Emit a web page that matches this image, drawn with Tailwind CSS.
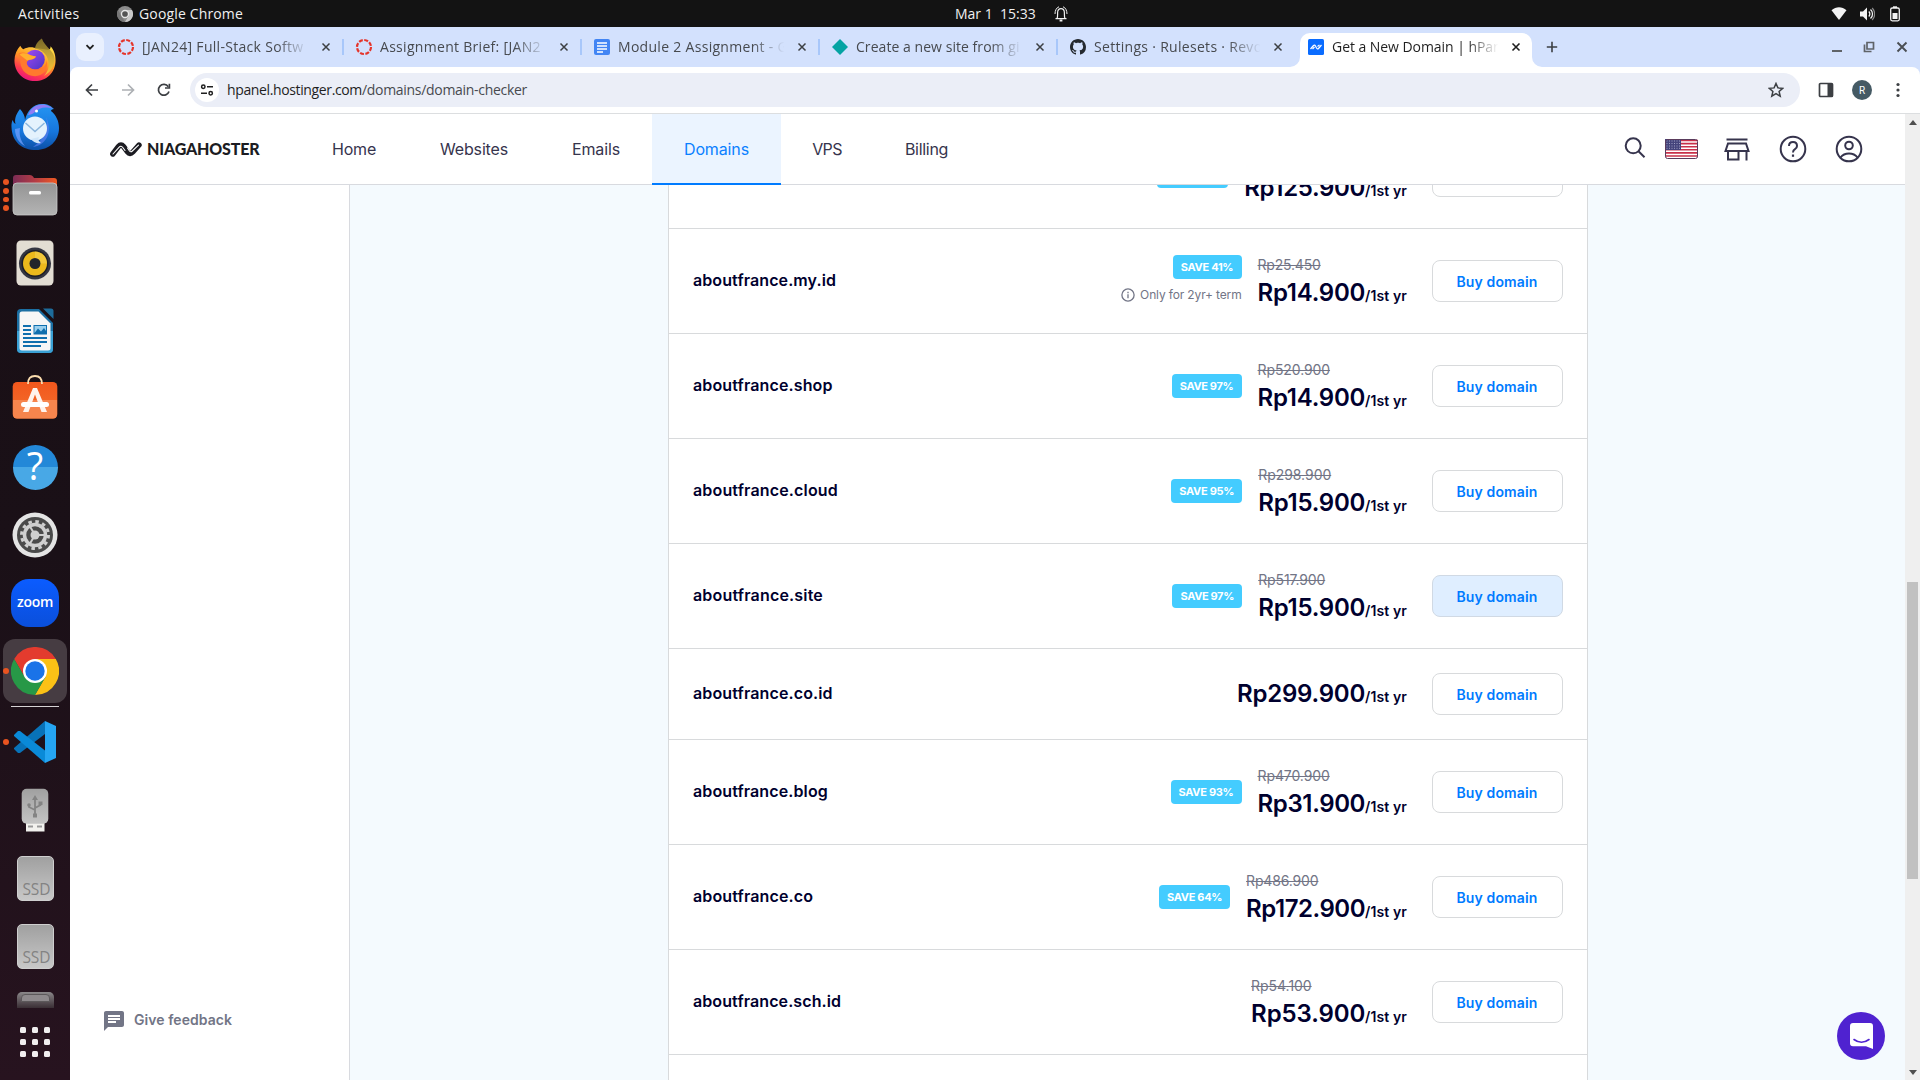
<!DOCTYPE html>
<html lang="en">
<head>
<meta charset="utf-8">
<title>Get a New Domain | hPanel</title>
<script src="https://cdn.jsdelivr.net/npm/@tailwindcss/browser@4"></script>
</head>
<body class="w-[1920px] h-[1080px] overflow-hidden bg-[#131313] font-['Open_Sans',sans-serif]">
<div class="flex h-[1080px] w-[1920px] flex-col">

  <!-- GNOME top bar -->
  <header class="relative flex h-[27px] shrink-0 items-center bg-[#131313] text-sm leading-[27px] text-[#f0f0f0]">
    <span class="ml-[18px] w-[99px] tracking-[0.4px]">Activities</span>
    <svg class="size-4" viewBox="0 0 48 48"><circle cx="24" cy="24" r="24" fill="#8c8c8c"/><path d="M24 12H44.8A24 24 0 0 1 24 48L34.4 30Z" fill="#c9c9c9"/><path d="M24 48A24 24 0 0 1 3.2 12L13.6 30Z" fill="#777"/><circle cx="24" cy="24" r="12.5" fill="#e8e8e8"/><circle cx="24" cy="24" r="8.5" fill="#555"/></svg>
    <span class="ml-[6px] tracking-[0.15px]">Google Chrome</span>
    <div class="absolute left-[955px] top-0 flex items-center gap-[17px]">
      <span class="whitespace-pre">Mar 1  15:33</span>
      <svg class="size-4" viewBox="0 0 16 16" fill="none" stroke="#f0f0f0" stroke-width="1.2"><path d="M2.5 12.7H13.5M4 12.5C4.8 10.5 4.6 9 4.6 6.8C4.6 4 6 2.6 8 2.6S11.400 4 11.400 6.800C11.400 9 11.200 10.500 12 12.500"/><path d="M6.600 14.500H9.400" stroke-width="2"/><path d="M2 8C2 4.500 3.500 1.500 6 .8M14 8C14 4.500 12.500 1.500 10 .8" stroke-width="1"/></svg>
    </div>
    <div class="ml-auto mr-[17px] flex items-center gap-[12px]">
      <svg class="size-4" viewBox="0 0 16 16" fill="#f2f2f2"><path d="M.5 4.200C5 .3 11 .3 15.500 4.200L8 14Z"/></svg>
      <svg class="size-4" viewBox="0 0 16 16" fill="#f2f2f2"><path d="M1 5.500H4L8 1.500V14.500L4 10.500H1Z"/><path d="M9.800 5.500A3.500 3.500 0 0 1 9.800 10.500M11.500 3.500A6 6 0 0 1 11.500 12.500" fill="none" stroke="#f2f2f2" stroke-width="1.300"/><path d="M13.200 2A8.500 8.500 0 0 1 13.200 14" fill="none" stroke="#8a8a8a" stroke-width="1.200"/></svg>
      <svg class="size-4" viewBox="0 0 16 16"><path d="M6 .3H10V2H6Z" fill="#f2f2f2"/><rect x="3.700" y="2" width="8.600" height="12.800" rx="1.500" fill="none" stroke="#f2f2f2" stroke-width="1.300"/><rect x="5.500" y="7" width="5" height="6" fill="#f2f2f2"/></svg>
    </div>
  </header>

  <div class="flex min-h-0 flex-1">

    <!-- Dock -->
    <aside class="flex w-[70px] shrink-0 flex-col items-center bg-linear-to-b from-[#190f15] via-[#1a1017] to-[#27131f]">
      <div class="flex h-[66px] shrink-0 items-center justify-center pb-[2px]">
        <svg class="h-[45px] w-[44px]" viewBox="0 0 44 46">
          <defs>
            <linearGradient id="ff1" x1=".8" y1="0" x2=".3" y2="1"><stop offset="0" stop-color="#ffe14a"/><stop offset=".45" stop-color="#ff9a22"/><stop offset=".75" stop-color="#ff3d4d"/><stop offset="1" stop-color="#e8127e"/></linearGradient>
            <linearGradient id="ff2" x1="0" y1="0" x2="1" y2="1"><stop offset="0" stop-color="#a44af5"/><stop offset="1" stop-color="#4a35c4"/></linearGradient>
            <linearGradient id="ff3" x1="0" y1="0" x2="0" y2="1"><stop offset="0" stop-color="#8d7a2b"/><stop offset="1" stop-color="#ffd43c"/></linearGradient>
          </defs>
          <path d="M7 9C8 11 8.500 11.500 10 12.500C14 10.500 18 10 21 11L35 13C37 13 38 12 38 9.500C42 14 43 19 43 24C43 36 34 45 22 45S1 36 1 24C1 18 3.500 13 7 9Z" fill="url(#ff1)"/>
          <path d="M29 1.500C24 5 22.500 8 22 12C30 13 36 19 36 28C36 34 33 38 31 40C38 36 42 30 42 22C41.500 14 32 10 29 1.500Z" fill="url(#ff3)" opacity=".85"/>
          <circle cx="22" cy="23" r="10" fill="url(#ff2)"/>
          <path d="M5 17C9 14.500 14 16 18 19L23 20C22 23 18 23 15 24C12 26 14 31 20 33C27 35 33 31 34 24C36 33 30 40 22 40C12 40 6 32 7 22Z" fill="#ff7a2e"/>
          <path d="M6 18C10 15.500 15 17 18 19L23 20C21 23 18 23 14 24Z" fill="#ffb02e"/>
        </svg>
      </div>
      <div class="flex h-[68px] shrink-0 items-center justify-center">
        <svg class="size-12" viewBox="0 0 48 48">
          <defs><linearGradient id="tb" x1="0" y1="0" x2="0" y2="1"><stop offset="0" stop-color="#2596f3"/><stop offset=".6" stop-color="#1676dd"/><stop offset="1" stop-color="#0c4fa5"/></linearGradient></defs>
          <path d="M9 6C12 9 14 13 14 17C16 8 22 1 31 1C37 1 40 3 43 6C41 6 40 7 40 8C45 12 48 18 48 25C48 38 38 47 25 47C11 47 1 39 .5 24C.3 21 .8 19 1.500 17C2.500 19 3 20 4.500 21C3 15 6 10 9 6Z" fill="url(#tb)"/>
          <path d="M17 12C20 5 25 1 33 1.500C37 2 40 4 42 6C34 3 28 5 24 9C22 11 19 12 17 12Z" fill="#8f7cf5"/>
          <path d="M35 14C38 24 34 36 22 44C36 42 42 28 35 14Z" fill="#5a7ff0" opacity=".7"/>
          <path d="M4 26C4 34 8 40 14 43C9 37 8 31 9 25Z" fill="#79a4ff" opacity=".7"/>
          <ellipse cx="24" cy="25.500" rx="12" ry="12" fill="#e4f2fd"/><path d="M20 36C23 40 27 41 30 40C27 38 27 36 28 34Z" fill="#cfe6fb"/>
          <path d="M14.500 20L24 28.500L33.500 20" fill="none" stroke="#8bb6dd" stroke-width="1.500"/>
          <circle cx="25.500" cy="8" r="1.500" fill="#fff"/>
        </svg>
      </div>
      <div class="relative flex h-[68px] w-full shrink-0 items-center justify-center">
        <div class="absolute left-[3px] top-[18px] flex flex-col gap-[3px]"><i class="size-[5.800px] rounded-full bg-[#e95420]"></i><i class="size-[5.800px] rounded-full bg-[#e95420]"></i><i class="size-[5.800px] rounded-full bg-[#e95420]"></i><i class="size-[5.800px] rounded-full bg-[#e95420]"></i></div>
        <svg class="h-[42px] w-[46px]" viewBox="0 0 46 42">
          <defs><linearGradient id="fl1"><stop offset="0" stop-color="#7c2c55"/><stop offset=".5" stop-color="#b43c45"/><stop offset="1" stop-color="#f05a22"/></linearGradient><linearGradient id="fl2" x2="0" y2="1"><stop offset="0" stop-color="#949494"/><stop offset="1" stop-color="#b4b4b4"/></linearGradient></defs>
          <path d="M1 14V4Q1 1 4 1H18Q20 1 21 2.500L22 4H42Q45 4 45 7V14Z" fill="url(#fl1)"/>
          <rect x="1" y="9" width="44" height="32" rx="4" fill="url(#fl2)" stroke="#c9c9c9" stroke-width=".8"/><rect x="17" y="17" width="12" height="3.500" rx="1.500" fill="#fff"/>
        </svg>
      </div>
      <div class="flex h-[68px] shrink-0 items-center justify-center">
        <svg class="h-[46px] w-[38px]" viewBox="0 0 38 46"><rect x=".5" y=".5" width="37" height="45" rx="4.500" fill="#e2ddd3"/><circle cx="19" cy="23.500" r="16" fill="#343642"/><circle cx="19" cy="23.500" r="13.500" fill="#1d1e26"/><circle cx="19" cy="23.500" r="12" fill="#ecb91c"/><path d="M19 11.500A12 12 0 0 1 31 23.500H19Z" fill="#f6d55a" opacity=".5"/><circle cx="19" cy="23.500" r="5.500" fill="#23242a"/></svg>
      </div>
      <div class="flex h-[68px] shrink-0 items-center justify-center">
        <svg class="h-[46px] w-[38px]" viewBox="0 0 38 46"><path d="M5 1H23L37 15V41Q37 45 33 45H5Q1 45 1 41V5Q1 1 5 1Z" fill="#1b6fa3"/><path d="M1 23H37V41Q37 45 33 45H5Q1 45 1 41Z" fill="#3aa0d4"/><path d="M27 .5H35Q37.500 .5 37.500 3V11Z" fill="#1d6c9b"/><path d="M6 3.500H22.500L34.500 15.500V40Q34.500 42.500 32 42.500H6Q3.500 42.500 3.500 40V6Q3.500 3.500 6 3.500Z" fill="#f6f6f6"/><g fill="#0f6fae"><path d="M7 17H15V19H7ZM7 21H15V23H7ZM7 25H15V27H7ZM7 29H31V31H7ZM7 33H31V35H7ZM7 37H25V39H7Z"/><path d="M17.500 17H31V26.500H17.500Z" /></g><path d="M18.500 18H30V23L28 20L25 23.500L22 20.500L18.500 25Z" fill="#9bd0ee"/></svg>
      </div>
      <div class="flex h-[68px] shrink-0 items-center justify-center">
        <svg class="-mt-[4px] h-[46px] w-[46px]" viewBox="0 0 46 46"><defs><linearGradient id="sw" x2="0" y2="1"><stop offset="0" stop-color="#f2571c"/><stop offset="1" stop-color="#f4712f"/></linearGradient></defs><rect x=".7" y="8" width="44.600" height="36.500" rx="4.500" fill="url(#sw)"/><path d="M1 26H45V40Q45 44.500 41 44.500H5Q1 44.500 1 40Z" fill="#f6854d"/><path d="M16 10Q16 2 23 2T30 10" fill="none" stroke="#fbdcae" stroke-width="1.800"/><path d="M21 14H25L35 38H29.500L23 20.500L16.500 38H11Z" fill="#fff3ec"/><rect x="9" y="28" width="28" height="5" rx="2.500" fill="#fff"/></svg>
      </div>
      <div class="flex h-[68px] shrink-0 items-center justify-center">
        <div class="flex size-[45px] items-center justify-center rounded-full bg-linear-to-b from-[#2388d8] from-50% to-[#48a8e6] to-50% pb-1 font-['Open_Sans',sans-serif] text-[38px] leading-none text-white">?</div>
      </div>
      <div class="flex h-[68px] shrink-0 items-center justify-center">
        <svg class="size-[46px]" viewBox="0 0 46 46"><circle cx="23" cy="23" r="22.500" fill="#e4e4e4"/><circle cx="23" cy="23" r="18" fill="#4a4a4a"/><circle cx="23" cy="23" r="13.500" fill="none" stroke="#cfcfcf" stroke-width="3" stroke-dasharray="3.530 3.530"/><circle cx="23" cy="23" r="10.500" fill="none" stroke="#cfcfcf" stroke-width="3.500"/><circle cx="23" cy="23" r="4.500" fill="#cfcfcf"/><path d="M23 23L18 14.500M23 23L18 31.500M23 23H34" stroke="#cfcfcf" stroke-width="2"/></svg>
      </div>
      <div class="flex h-[68px] shrink-0 items-center justify-center">
        <div class="flex size-12 items-center justify-center rounded-[18px] bg-linear-to-b from-[#0b5cff] to-[#0a4fdb] font-['Open_Sans',sans-serif] text-[14px] font-semibold leading-none tracking-[-0.300px] text-white"><span class="-mt-[3px]">zoom</span></div>
      </div>
      <div class="relative flex h-[68px] w-full shrink-0 items-center justify-center">
        <div class="flex size-[64px] items-center justify-center rounded-[12px] bg-[#463c42]">
          <svg class="size-12" viewBox="0 0 48 48"><path d="M3.200 12A24 24 0 0 1 44.800 12H24L13.600 30Z" fill="#e33b2e"/><path d="M44.800 12A24 24 0 0 1 24 48L34.400 30L24 12Z" fill="#fbc116"/><path d="M24 48A24 24 0 0 1 3.200 12L13.600 30H34.400Z" fill="#279847"/><circle cx="24" cy="24" r="12" fill="#fff"/><circle cx="24" cy="24" r="9.700" fill="#1a73e8"/></svg>
        </div>
        <i class="absolute left-[3px] top-[31px] size-[5.800px] rounded-full bg-[#e95420]"></i>
      </div>
      <div class="mb-px mt-px h-px w-12 shrink-0 bg-[#d5d2d4]"></div>
      <div class="relative flex h-[68px] w-full shrink-0 items-center justify-center">
        <svg class="size-[42px]" viewBox="0 0 42 42"><path d="M31 0L0 27V28L4 32H6L31 13Z" fill="#0872b8"/><path d="M4 10H6L31 29.500V42L0 15V14Z" fill="#0a8ad8"/><path d="M31 0L42 5V37L31 42Z" fill="#25a5f2"/></svg>
        <i class="absolute left-[3px] top-[31px] size-[5.800px] rounded-full bg-[#e95420]"></i>
      </div>
      <div class="flex h-[68px] shrink-0 items-center justify-center">
        <svg class="h-[44px] w-[28px]" viewBox="0 0 28 44"><defs><linearGradient id="gr" x2="0" y2="1"><stop offset="0" stop-color="#a0a0a0"/><stop offset="1" stop-color="#c4c4c4"/></linearGradient></defs><rect x="5" y="34" width="18.500" height="9.500" fill="#f2f1ee"/><path d="M7 37.500H12V39.500H7ZM16 37.500H21V39.500H16Z" fill="#999"/><rect x=".7" y=".7" width="26.600" height="35" rx="5" fill="url(#gr)"/><g stroke="#838383" stroke-width="1.800" fill="none"><path d="M14 10V27M14 22L8 19V16M14 20L19.500 17V15"/></g><path d="M11 12L14 7L17 12ZM12 25.500H16V29.500H12ZM17.500 13.500H21.500V17H17.500Z" fill="#838383"/><circle cx="8" cy="17" r="1.800" fill="#838383"/></svg>
      </div>
      <div class="flex h-[68px] shrink-0 items-center justify-center">
        <div class="flex h-[45px] w-[37px] items-end justify-center rounded-[5px] border border-[#cfcfcf] bg-linear-to-b from-[#a0a0a0] to-[#c8c8c8] pb-[2px] pl-[3px] text-[15.500px] leading-[18px] text-[#838383]">SSD</div>
      </div>
      <div class="flex h-[68px] shrink-0 items-center justify-center">
        <div class="flex h-[45px] w-[37px] items-end justify-center rounded-[5px] border border-[#cfcfcf] bg-linear-to-b from-[#a0a0a0] to-[#c8c8c8] pb-[2px] pl-[3px] text-[15.500px] leading-[18px] text-[#838383]">SSD</div>
      </div>
      <div class="h-[28px] shrink-0 overflow-hidden pt-[12px]">
        <div class="h-[16px] w-[37px] rounded-t-[5px] bg-linear-to-b from-[#8b888a] to-[#3a2f35] px-1 pt-[2px]"><div class="h-2 rounded-t-[4px] border border-[#5c585a] bg-[#8e898c]"></div></div>
      </div>
      <div class="mt-[19px] grid grid-cols-3 gap-[6px]">
        <i class="size-[6px] rounded-[1.500px] bg-[#f0eeef]"></i><i class="size-[6px] rounded-[1.500px] bg-[#f0eeef]"></i><i class="size-[6px] rounded-[1.500px] bg-[#f0eeef]"></i>
        <i class="size-[6px] rounded-[1.500px] bg-[#f0eeef]"></i><i class="size-[6px] rounded-[1.500px] bg-[#f0eeef]"></i><i class="size-[6px] rounded-[1.500px] bg-[#f0eeef]"></i>
        <i class="size-[6px] rounded-[1.500px] bg-[#f0eeef]"></i><i class="size-[6px] rounded-[1.500px] bg-[#f0eeef]"></i><i class="size-[6px] rounded-[1.500px] bg-[#f0eeef]"></i>
      </div>
    </aside>

    <!-- Browser window -->
    <div class="flex min-w-0 flex-1 flex-col bg-[#d3e1fd]">

      <!-- Tab strip -->
      <div class="flex h-10 shrink-0 items-center pl-[6px] text-sm text-[#474a4f]">
        <div class="flex size-7 items-center justify-center rounded-[9px] bg-[#e9f0fe]"><svg class="size-[10px]" viewBox="0 0 10 10" fill="none" stroke="#1f1f1f" stroke-width="1.800"><path d="M1.500 3.200L5 6.700L8.500 3.200"/></svg></div>
        <div class="flex h-full w-[240px] items-center pl-[13px]">
          <svg class="size-[18px] shrink-0" viewBox="0 0 18 18"><circle cx="9" cy="9" r="7" fill="none" stroke="#e5352b" stroke-width="2.200" stroke-dasharray="4 1.500"/></svg>
          <span class="ml-[7px] w-[168px] shrink-0 overflow-hidden whitespace-nowrap tracking-[0.3px] [mask-image:linear-gradient(to_right,#000_80%,transparent_99%)]">[JAN24] Full-Stack Softw</span>
          <svg class="ml-[11px] size-[10px] shrink-0" viewBox="0 0 10 10" stroke="#3c3f43" stroke-width="1.500"><path d="M1.500 1.500L8.500 8.500M8.500 1.500L1.500 8.500"/></svg>
          <i class="ml-[11px] h-4 w-[2px] shrink-0 bg-[#a8c7fa]"></i>
        </div>
        <div class="flex h-full w-[238px] items-center pl-[11px]">
          <svg class="size-[18px] shrink-0" viewBox="0 0 18 18"><circle cx="9" cy="9" r="7" fill="none" stroke="#e5352b" stroke-width="2.200" stroke-dasharray="4 1.500"/></svg>
          <span class="ml-[7px] w-[168px] shrink-0 overflow-hidden whitespace-nowrap tracking-[0.3px] [mask-image:linear-gradient(to_right,#000_80%,transparent_99%)]">Assignment Brief: [JAN2</span>
          <svg class="ml-[11px] size-[10px] shrink-0" viewBox="0 0 10 10" stroke="#3c3f43" stroke-width="1.500"><path d="M1.500 1.500L8.500 8.500M8.500 1.500L1.500 8.500"/></svg>
          <i class="ml-[11px] h-4 w-[2px] shrink-0 bg-[#a8c7fa]"></i>
        </div>
        <div class="flex h-full w-[238px] items-center pl-[12px]">
          <svg class="size-4 shrink-0" viewBox="0 0 16 16"><rect width="16" height="16" rx="2" fill="#4285f4"/><path d="M3 4H13M3 7H13M3 10H13M3 13H9" stroke="#fff" stroke-width="1.500"/></svg>
          <span class="ml-2 w-[168px] shrink-0 overflow-hidden whitespace-nowrap tracking-[0.300px] [mask-image:linear-gradient(to_right,#000_80%,transparent_99%)]">Module 2 Assignment - G</span>
          <svg class="ml-[11px] size-[10px] shrink-0" viewBox="0 0 10 10" stroke="#3c3f43" stroke-width="1.500"><path d="M1.500 1.500L8.500 8.500M8.500 1.500L1.500 8.500"/></svg>
          <i class="ml-[11px] h-4 w-[2px] shrink-0 bg-[#a8c7fa]"></i>
        </div>
        <div class="flex h-full w-[238px] items-center pl-[12px]">
          <svg class="size-4 shrink-0" viewBox="0 0 16 16"><path d="M8 0L16 8L8 16L0 8Z" fill="#05a3a3"/></svg>
          <span class="ml-2 w-[168px] shrink-0 overflow-hidden whitespace-nowrap tracking-[0.050px] [mask-image:linear-gradient(to_right,#000_80%,transparent_99%)]">Create a new site from gi</span>
          <svg class="ml-[11px] size-[10px] shrink-0" viewBox="0 0 10 10" stroke="#3c3f43" stroke-width="1.500"><path d="M1.500 1.500L8.500 8.500M8.500 1.500L1.500 8.500"/></svg>
          <i class="ml-[11px] h-4 w-[2px] shrink-0 bg-[#a8c7fa]"></i>
        </div>
        <div class="flex h-full w-[242px] items-center pl-[12px]">
          <svg class="size-4 shrink-0" viewBox="0 0 16 16" fill="#24292f"><path d="M8 0C3.580 0 0 3.580 0 8c0 3.540 2.290 6.530 5.470 7.590.4.070.55-.17.55-.38 0-.19-.01-.82-.01-1.490-2.010.37-2.530-.49-2.690-.94-.09-.23-.48-.94-.82-1.130-.28-.15-.68-.52-.01-.53.63-.01 1.080.58 1.230.82.72 1.210 1.870.87 2.330.66.07-.52.28-.87.51-1.070-1.780-.2-3.640-.89-3.640-3.950 0-.87.31-1.590.82-2.150-.08-.2-.36-1.020.08-2.120 0 0 .67-.21 2.200.82.64-.18 1.320-.27 2-.27s1.360.09 2 .27c1.530-1.040 2.200-.82 2.200-.82.44 1.100.16 1.920.08 2.120.51.56.82 1.270.82 2.150 0 3.070-1.870 3.750-3.650 3.950.29.25.54.73.54 1.480 0 1.070-.01 1.930-.01 2.200 0 .21.15.46.55.38A8.010 8.010 0 0 0 16 8c0-4.420-3.580-8-8-8Z"/></svg>
          <span class="ml-2 w-[168px] shrink-0 overflow-hidden whitespace-nowrap tracking-[0.300px] [mask-image:linear-gradient(to_right,#000_80%,transparent_99%)]">Settings · Rulesets · Revo</span>
          <svg class="ml-[11px] size-[10px] shrink-0" viewBox="0 0 10 10" stroke="#3c3f43" stroke-width="1.500"><path d="M1.500 1.500L8.500 8.500M8.500 1.500L1.500 8.500"/></svg>
        </div>
        <div class="relative flex h-[34px] w-[232px] shrink-0 items-center self-end rounded-t-[10px] bg-white pb-[6px] pl-2 text-[#1f1f1f]">
          <svg class="absolute -left-[10px] bottom-0 size-[10px]" viewBox="0 0 10 10" fill="#fff"><path d="M10 0V10H0A10 10 0 0 0 10 0Z"/></svg>
          <svg class="absolute -right-[10px] bottom-0 size-[10px]" viewBox="0 0 10 10" fill="#fff"><path d="M0 0V10H10A10 10 0 0 1 0 0Z"/></svg>
          <svg class="size-4 shrink-0" viewBox="0 0 16 16"><rect width="16" height="16" rx="1.500" fill="#0a6cff"/><path d="M2.500 10L5.500 6.500Q6.500 5.500 7.500 7L8.500 9Q9.500 10.500 10.500 9.500L13.500 6M4.500 10L6.500 8M9.500 7.500L11.500 6" fill="none" stroke="#fff" stroke-width="1.200"/></svg>
          <span class="ml-2 w-[168px] shrink-0 overflow-hidden whitespace-nowrap tracking-[-0.050px] [mask-image:linear-gradient(to_right,#000_80%,transparent_99%)]">Get a New Domain | hPan</span>
          <svg class="ml-[11px] size-[10px] shrink-0" viewBox="0 0 10 10" stroke="#1f1f1f" stroke-width="1.600"><path d="M1.500 1.500L8.500 8.500M8.500 1.500L1.500 8.500"/></svg>
        </div>
        <svg class="ml-[14px] size-3" viewBox="0 0 12 12" stroke="#3c3f43" stroke-width="1.600"><path d="M6 .8V11.200M.8 6H11.200"/></svg>
        <svg class="ml-auto size-3" viewBox="0 0 12 12" fill="#5f6368"><path d="M1 9H11V11H1Z"/></svg>
        <svg class="ml-[20px] size-3" viewBox="0 0 12 12" fill="none" stroke="#5f6368" stroke-width="1.700"><path d="M4 1.500H10.500V8H4ZM1.500 3.500V10.500H8.500"/></svg>
        <svg class="ml-[21px] mr-[12px] size-3" viewBox="0 0 12 12" stroke="#4a4e53" stroke-width="1.900"><path d="M1.500 1.500L10.500 10.500M10.500 1.500L1.500 10.500"/></svg>
      </div>

      <!-- Toolbar -->
      <div class="flex h-[46px] shrink-0 items-center rounded-t-[8px] bg-white pl-[15px]">
        <svg class="size-[14px]" viewBox="0 0 14 14" fill="none" stroke="#3c3f43" stroke-width="1.700"><path d="M13 7H2M7 1.500L1.500 7L7 12.500"/></svg>
        <svg class="ml-[22px] size-[14px]" viewBox="0 0 14 14" fill="none" stroke="#adb0b4" stroke-width="1.700"><path d="M1 7H12M7 1.500L12.500 7L7 12.500"/></svg>
        <svg class="ml-[22px] size-[14px]" viewBox="0 0 14 14" fill="none" stroke="#3c3f43" stroke-width="1.700"><path d="M12 8.500A5.400 5.400 0 1 1 11.300 3.700"/><path d="M8 5H12.400V.7" /></svg>
        <div class="ml-[19px] flex h-[34px] w-[1610px] items-center rounded-full bg-[#ebeef7] pl-[5px] text-sm">
          <div class="flex size-6 items-center justify-center rounded-full bg-white"><svg class="size-[14px]" viewBox="0 0 14 14" fill="none" stroke="#1f1f1f" stroke-width="1.500"><circle cx="3.300" cy="3.800" r="1.700"/><path d="M7 3.800H13M1 10.200H7"/><circle cx="10.700" cy="10.200" r="1.700"/></svg></div>
          <span class="ml-2 tracking-[-0.370px] text-[#1f1f1f]">hpanel.hostinger.com</span><span class="tracking-[-0.300px] text-[#474a4f]">/domains/domain-checker</span>
          <svg class="ml-auto mr-[16px] size-4" viewBox="0 0 16 16" fill="none" stroke="#3c3f43" stroke-width="1.500"><path d="M8 1.500L9.900 5.900L14.700 6.300L11.100 9.500L12.200 14.200L8 11.700L3.800 14.200L4.900 9.500L1.300 6.300L6.100 5.900Z"/></svg>
        </div>
        <svg class="ml-[18px] size-4" viewBox="0 0 16 16"><rect x="1.500" y="1.500" width="13" height="13" rx="1" fill="none" stroke="#3c3f43" stroke-width="1.700"/><path d="M9.500 1.500H14.500V14.500H9.500Z" fill="#3c3f43"/></svg>
        <div class="ml-[18px] flex size-5 items-center justify-center rounded-full bg-[#455a64] font-[Roboto,sans-serif] text-[10px] text-white">R</div>
        <svg class="ml-[18px] size-4" viewBox="0 0 16 16" fill="#3c3f43"><circle cx="8" cy="2.500" r="1.600"/><circle cx="8" cy="8" r="1.600"/><circle cx="8" cy="13.500" r="1.600"/></svg>
      </div>

      <!-- Page -->
      <div class="flex min-h-0 flex-1 border-t border-[#dcdee0] font-[Inter,sans-serif]">
        <div class="flex min-w-0 flex-1 flex-col bg-white">
          <nav class="flex h-[71px] shrink-0 items-center border-b border-[#d8dadf] text-base text-[#36344d]">
            <svg class="ml-10 h-[15px] w-8 shrink-0" viewBox="0 0 32 15" fill="none" stroke-linecap="round" stroke-linejoin="round"><path d="M2.800 12L8.500 4.500Q11 1.500 13.500 4.500L17.500 9.800Q20 13 22.800 10L29 3" stroke="#1c1c22" stroke-width="5.400"/><path d="M3 12L9 5.300Q11 3 12.800 5.500L15 8.500M17.500 6L19.500 9Q20.800 10.500 22.300 9L28.500 3.200" stroke="#fff" stroke-width="1.100"/></svg>
            <span class="ml-[5px] w-[116px] font-[Lato,sans-serif] font-black tracking-[-0.150px] text-[#1c1c22]">NIAGAHOSTER</span>
            <div class="ml-[37px] flex h-full">
              <a class="flex w-[108px] items-center justify-center pb-px tracking-[-0.200px]">Home</a>
              <a class="flex w-[132px] items-center justify-center pb-px tracking-[-0.160px]">Websites</a>
              <a class="flex w-[112px] items-center justify-center pb-px tracking-[-0.140px]">Emails</a>
              <a class="relative flex w-[129px] items-center justify-center bg-[#ebf4ff] pb-px tracking-[-0.130px] text-[#0a80ff]">Domains<i class="absolute inset-x-0 -bottom-px h-[2px] bg-[#007bff]"></i></a>
              <a class="flex w-[92px] items-center justify-center pb-px tracking-[-0.600px]">VPS</a>
              <a class="flex w-[107px] items-center justify-center pb-px tracking-[-0.300px]">Billing</a>
            </div>
            <svg class="-mt-[2px] ml-auto size-[22px]" viewBox="0 0 22 22" fill="none" stroke="#36344d" stroke-width="2"><circle cx="9.200" cy="8.800" r="7.500"/><path d="M14.500 14.300L20.500 20.300"/></svg>
            <svg class="ml-[19px] h-[20px] w-[33px]" viewBox="0 0 33 20"><rect width="33" height="20" rx="2" fill="#fff"/><path d="M0 1.500H33M0 4.600H33M0 7.700H33M0 10.800H33M0 13.900H33M0 17H33" stroke="#c8304a" stroke-width="1.600"/><path d="M0 0H16V11H0Z" fill="#45447c"/><path d="M1.500 2H15M1.500 4.500H15M1.500 7H15M1.500 9.300H15" stroke="#b9b8d6" stroke-width=".8" stroke-dasharray="1 1.500"/><rect x=".5" y=".5" width="32" height="19" rx="2" fill="none" stroke="#5a3b5c"/></svg>
            <svg class="ml-[26px] h-[23px] w-[26px]" viewBox="0 0 26 23" fill="none" stroke="#36344d" stroke-width="2"><path d="M2.500 1.500H23.500M4 5.500H22L24.500 13H1.500ZM4 13V21.500H14.500V13M22.500 13V22.500"/></svg>
            <svg class="ml-[29px] size-[28px]" viewBox="0 0 28 28" fill="none" stroke="#36344d" stroke-width="2"><circle cx="14" cy="14" r="12.300"/><path d="M10 11Q10 7 14 7T18 11Q18 13 16 14.200T14 17.500"/><path d="M14 19.500V21.800" stroke-width="2.200"/></svg>
            <svg class="ml-[28px] mr-[42px] size-[28px]" viewBox="0 0 28 28" fill="none" stroke="#36344d" stroke-width="2"><circle cx="14" cy="14" r="12.300"/><circle cx="14" cy="10.500" r="3.800"/><path d="M5.500 22.500Q8.500 18.500 14 18.500T22.500 22.500"/></svg>
          </nav>

          <div class="flex min-h-0 flex-1">
            <div class="flex w-[280px] shrink-0 items-end border-r border-[#d8dadf] pb-[47px] pl-[32px]">
              <div class="flex items-center gap-[8px]">
                <svg class="size-[24px] shrink-0" viewBox="0 0 24 24" fill="#727586"><path d="M20 2H4C2.900 2 2.010 2.900 2.010 4L2 22L6 18H20C21.100 18 22 17.100 22 16V4C22 2.900 21.100 2 20 2ZM6 6H18V8H6ZM14 14H6V12H14ZM18 11H6V9H18Z"/></svg>
                <span class="-mt-[2px] text-sm font-semibold tracking-[0.050px] text-[#727586]">Give feedback</span>
              </div>
            </div>
            <main class="relative flex min-h-0 flex-1 justify-center overflow-hidden bg-[#f4fafe]">
              <!-- Domain results -->
              <ul class="-mt-[61px] ml-[1px] flex h-[960px] w-[920px] shrink-0 flex-col border-x border-[#d8dadc] bg-white text-[#00002e]">
                <li class="flex h-[105px] shrink-0 items-center justify-end gap-[25px] border-b border-[#d8dadc] px-6">
                  <div class="flex items-center gap-4">
                    <span class="flex h-6 w-[71px] items-center justify-center rounded bg-[#44ccff]"></span>
                    <div class="flex flex-col pt-6"><div class="flex items-baseline leading-8"><b class="text-2xl leading-8 font-semibold tracking-[-0.320px]">Rp125.900</b><span class="text-sm font-semibold tracking-[0.100px]">/1st yr</span></div></div>
                  </div>
                  <a class="flex h-[42px] w-[131px] rounded-lg border border-[#d8dadc]"></a>
                </li>
                <li class="flex h-[105px] shrink-0 items-center gap-[25px] border-b border-[#d8dadc] px-6">
                  <h3 class="mr-auto pb-[2px] text-base font-semibold tracking-[0.100px]">aboutfrance.my.id</h3>
                  <div class="flex items-center gap-4">
                    <div class="flex flex-col items-end gap-1"><span class="flex h-6 w-[69px] items-center justify-center rounded bg-[#44ccff] text-[11px] font-bold tracking-[-0.300px] text-white">SAVE 41%</span>
                    <span class="flex h-6 items-center gap-[5px] text-xs tracking-[-0.140px] text-[#727586]"><svg class="size-[14px]" viewBox="0 0 14 14" fill="none" stroke="#727586" stroke-width="1.300"><circle cx="7" cy="7" r="6.100"/><path d="M7 6.200V10.200M7 3.800V5.200"/></svg>Only for 2yr+ term</span></div>
                    <div class="flex flex-col"><s class="text-sm leading-6 tracking-[-0.200px] text-[#727586]">Rp25.450</s><div class="flex items-baseline leading-8"><b class="text-2xl leading-8 font-semibold tracking-[-0.250px]">Rp14.900</b><span class="text-sm font-semibold tracking-[0.100px]">/1st yr</span></div></div>
                  </div>
                  <a class="flex h-[42px] w-[131px] items-center justify-center rounded-lg border border-[#d8dadc] pr-px pt-px text-sm font-semibold tracking-[0.130px] text-[#007bff]">Buy domain</a>
                </li>
                <li class="flex h-[105px] shrink-0 items-center gap-[25px] border-b border-[#d8dadc] px-6">
                  <h3 class="mr-auto pb-[2px] text-base font-semibold tracking-[0.130px]">aboutfrance.shop</h3>
                  <div class="flex items-center gap-4">
                    <span class="flex h-6 w-[70px] items-center justify-center rounded bg-[#44ccff] text-[11px] font-bold tracking-[-0.360px] text-white">SAVE 97%</span>
                    <div class="flex flex-col"><s class="text-sm leading-6 tracking-[-0.100px] text-[#727586]">Rp520.900</s><div class="flex items-baseline leading-8"><b class="text-2xl leading-8 font-semibold tracking-[-0.250px]">Rp14.900</b><span class="text-sm font-semibold tracking-[0.100px]">/1st yr</span></div></div>
                  </div>
                  <a class="flex h-[42px] w-[131px] items-center justify-center rounded-lg border border-[#d8dadc] pr-px pt-px text-sm font-semibold tracking-[0.130px] text-[#007bff]">Buy domain</a>
                </li>
                <li class="flex h-[105px] shrink-0 items-center gap-[25px] border-b border-[#d8dadc] px-6">
                  <h3 class="mr-auto pb-[2px] text-base font-semibold tracking-[0.160px]">aboutfrance.cloud</h3>
                  <div class="flex items-center gap-4">
                    <span class="flex h-6 w-[71px] items-center justify-center rounded bg-[#44ccff] text-[11px] font-bold tracking-[-0.300px] text-white">SAVE 95%</span>
                    <div class="flex flex-col"><s class="text-sm leading-6 tracking-[-0.050px] text-[#727586]">Rp298.900</s><div class="flex items-baseline leading-8"><b class="text-2xl leading-8 font-semibold tracking-[-0.250px]">Rp15.900</b><span class="text-sm font-semibold tracking-[0.100px]">/1st yr</span></div></div>
                  </div>
                  <a class="flex h-[42px] w-[131px] items-center justify-center rounded-lg border border-[#d8dadc] pr-px pt-px text-sm font-semibold tracking-[0.130px] text-[#007bff]">Buy domain</a>
                </li>
                <li class="flex h-[105px] shrink-0 items-center gap-[25px] border-b border-[#d8dadc] px-6">
                  <h3 class="mr-auto pb-[2px] text-base font-semibold tracking-[0.180px]">aboutfrance.site</h3>
                  <div class="flex items-center gap-4">
                    <span class="flex h-6 w-[70px] items-center justify-center rounded bg-[#44ccff] text-[11px] font-bold tracking-[-0.360px] text-white">SAVE 97%</span>
                    <div class="flex flex-col"><s class="text-sm leading-6 tracking-[-0.140px] text-[#727586]">Rp517.900</s><div class="flex items-baseline leading-8"><b class="text-2xl leading-8 font-semibold tracking-[-0.250px]">Rp15.900</b><span class="text-sm font-semibold tracking-[0.100px]">/1st yr</span></div></div>
                  </div>
                  <a class="flex h-[42px] w-[131px] items-center justify-center rounded-lg border border-[#d0d9e4] bg-[#dfeeff] pr-px pt-px text-sm font-semibold tracking-[0.130px] text-[#007bff]">Buy domain</a>
                </li>
                <li class="flex h-[91px] shrink-0 items-center gap-[25px] border-b border-[#d8dadc] px-6">
                  <h3 class="mr-auto pb-[2px] text-base font-semibold tracking-[0.130px]">aboutfrance.co.id</h3>
                  <div class="flex items-baseline leading-8"><b class="text-2xl leading-8 font-semibold tracking-[-0.220px]">Rp299.900</b><span class="text-sm font-semibold tracking-[0.100px]">/1st yr</span></div>
                  <a class="flex h-[42px] w-[131px] items-center justify-center rounded-lg border border-[#d8dadc] pr-px pt-px text-sm font-semibold tracking-[0.130px] text-[#007bff]">Buy domain</a>
                </li>
                <li class="flex h-[105px] shrink-0 items-center gap-[25px] border-b border-[#d8dadc] px-6">
                  <h3 class="mr-auto pb-[2px] text-base font-semibold tracking-[0.110px]">aboutfrance.blog</h3>
                  <div class="flex items-center gap-4">
                    <span class="flex h-6 w-[71px] items-center justify-center rounded bg-[#44ccff] text-[11px] font-bold tracking-[-0.300px] text-white">SAVE 93%</span>
                    <div class="flex flex-col"><s class="text-sm leading-6 tracking-[-0.100px] text-[#727586]">Rp470.900</s><div class="flex items-baseline leading-8"><b class="text-2xl leading-8 font-semibold tracking-[-0.360px]">Rp31.900</b><span class="text-sm font-semibold tracking-[0.100px]">/1st yr</span></div></div>
                  </div>
                  <a class="flex h-[42px] w-[131px] items-center justify-center rounded-lg border border-[#d8dadc] pr-px pt-px text-sm font-semibold tracking-[0.130px] text-[#007bff]">Buy domain</a>
                </li>
                <li class="flex h-[105px] shrink-0 items-center gap-[25px] border-b border-[#d8dadc] px-6">
                  <h3 class="mr-auto pb-[2px] text-base font-semibold tracking-[0.130px]">aboutfrance.co</h3>
                  <div class="flex items-center gap-4">
                    <span class="flex h-6 w-[71px] items-center justify-center rounded bg-[#44ccff] text-[11px] font-bold tracking-[-0.300px] text-white">SAVE 64%</span>
                    <div class="flex flex-col"><s class="text-sm leading-6 tracking-[-0.160px] text-[#727586]">Rp486.900</s><div class="flex items-baseline leading-8"><b class="text-2xl leading-8 font-semibold tracking-[-0.460px]">Rp172.900</b><span class="text-sm font-semibold tracking-[0.100px]">/1st yr</span></div></div>
                  </div>
                  <a class="flex h-[42px] w-[131px] items-center justify-center rounded-lg border border-[#d8dadc] pr-px pt-px text-sm font-semibold tracking-[0.130px] text-[#007bff]">Buy domain</a>
                </li>
                <li class="flex h-[105px] shrink-0 items-center gap-[25px] border-b border-[#d8dadc] px-6">
                  <h3 class="mr-auto pb-[2px] text-base font-semibold tracking-[0.100px]">aboutfrance.sch.id</h3>
                  <div class="flex flex-col"><s class="text-sm leading-6 tracking-[-0.040px] text-[#727586]">Rp54.100</s><div class="flex items-baseline leading-8"><b class="text-2xl leading-8 font-semibold tracking-[-0.110px]">Rp53.900</b><span class="text-sm font-semibold tracking-[0.100px]">/1st yr</span></div></div>
                  <a class="flex h-[42px] w-[131px] items-center justify-center rounded-lg border border-[#d8dadc] pr-px pt-px text-sm font-semibold tracking-[0.130px] text-[#007bff]">Buy domain</a>
                </li>
              </ul>
              <!-- Chat launcher -->
              <div class="absolute bottom-[20px] right-[20px] flex size-12 items-center justify-center rounded-full bg-[#4f22d0]">
                <svg class="h-[26px] w-[23px]" viewBox="0 0 23 26"><path d="M3 0H20Q23 0 23 3V26L16 23.300H3Q0 23.300 0 20.300V3Q0 0 3 0Z" fill="#fff"/><path d="M4 16.500Q11.500 22 19 16.500" fill="none" stroke="#4f22d0" stroke-width="1.600" stroke-linecap="round"/></svg>
              </div>
            </main>
          </div>
        </div>

        <!-- Scrollbar -->
        <div class="flex w-[15px] shrink-0 flex-col items-center bg-[#efefef]">
          <svg class="mt-[6px] h-[5px] w-[8px]" viewBox="0 0 8 5" fill="#4f4f4f"><path d="M4 0L8 5H0Z"/></svg>
          <div class="mt-[457px] h-[297px] w-[11px] bg-[#c1c1c1]"></div>
          <svg class="mb-[5px] mt-auto h-[5px] w-[8px]" viewBox="0 0 8 5" fill="#4f4f4f"><path d="M4 5L8 0H0Z"/></svg>
        </div>
      </div>
    </div>
  </div>
</div>
</body>
</html>
